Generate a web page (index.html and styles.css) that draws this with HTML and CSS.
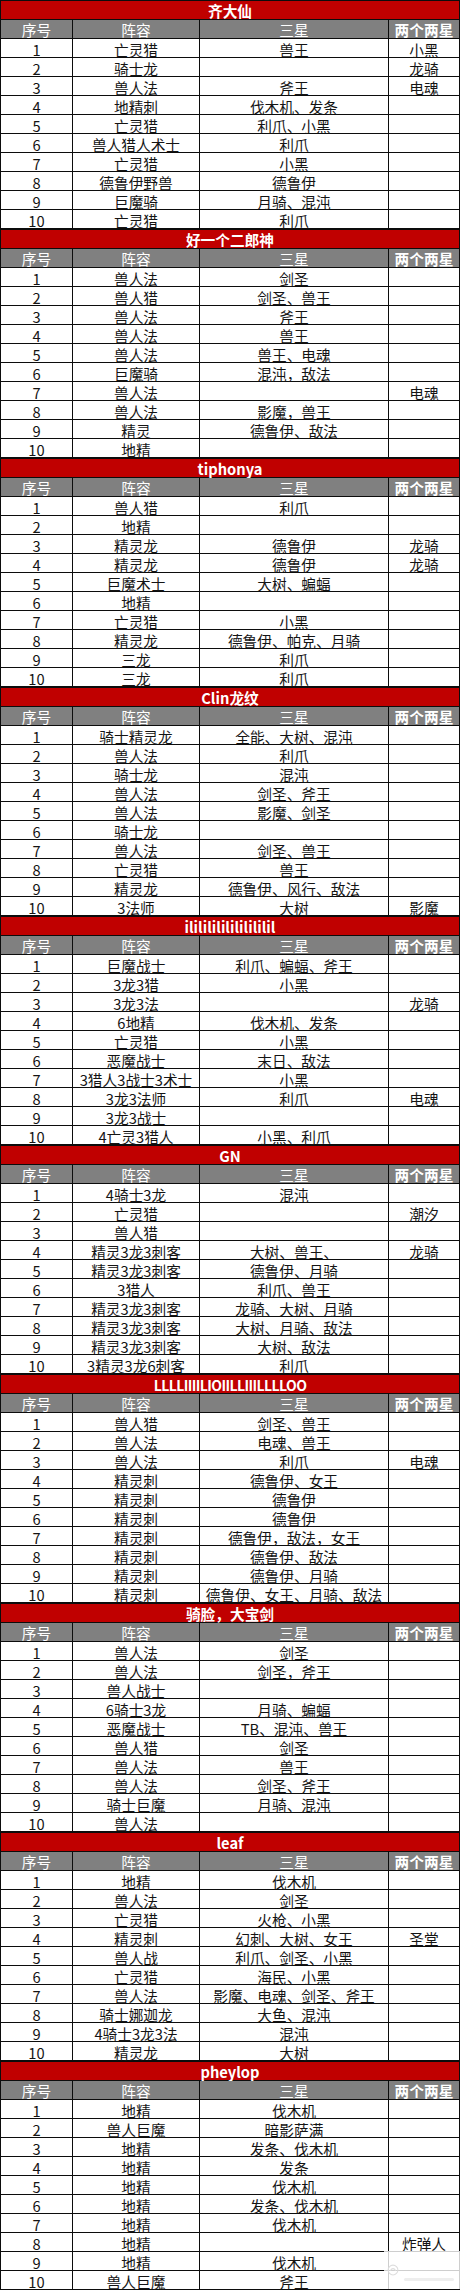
FILE: index.html
```html
<!DOCTYPE html>
<html lang="zh-CN">
<head>
<meta charset="utf-8">
<title>阵容表</title>
<link rel="stylesheet" href="styles.css">
</head>
<body>
<main class="sheet">

<section class="block">
<div class="title">齐大仙</div>
<div class="h">序号</div><div class="h">阵容</div><div class="h">三星</div><div class="h h4">两个两星</div>
<div class="c">1</div><div class="c">亡灵猎</div><div class="c">兽王</div><div class="c">小黑</div>
<div class="c">2</div><div class="c">骑士龙</div><div class="c"></div><div class="c">龙骑</div>
<div class="c">3</div><div class="c">兽人法</div><div class="c">斧王</div><div class="c">电魂</div>
<div class="c">4</div><div class="c">地精刺</div><div class="c">伐木机、发条</div><div class="c"></div>
<div class="c">5</div><div class="c">亡灵猎</div><div class="c">利爪、小黑</div><div class="c"></div>
<div class="c">6</div><div class="c">兽人猎人术士</div><div class="c">利爪</div><div class="c"></div>
<div class="c">7</div><div class="c">亡灵猎</div><div class="c">小黑</div><div class="c"></div>
<div class="c">8</div><div class="c">德鲁伊野兽</div><div class="c">德鲁伊</div><div class="c"></div>
<div class="c">9</div><div class="c">巨魔骑</div><div class="c">月骑、混沌</div><div class="c"></div>
<div class="c">10</div><div class="c">亡灵猎</div><div class="c">利爪</div><div class="c"></div>
</section>

<section class="block">
<div class="title">好一个二郎神</div>
<div class="h">序号</div><div class="h">阵容</div><div class="h">三星</div><div class="h h4">两个两星</div>
<div class="c">1</div><div class="c">兽人法</div><div class="c">剑圣</div><div class="c"></div>
<div class="c">2</div><div class="c">兽人猎</div><div class="c">剑圣、兽王</div><div class="c"></div>
<div class="c">3</div><div class="c">兽人法</div><div class="c">斧王</div><div class="c"></div>
<div class="c">4</div><div class="c">兽人法</div><div class="c">兽王</div><div class="c"></div>
<div class="c">5</div><div class="c">兽人法</div><div class="c">兽王、电魂</div><div class="c"></div>
<div class="c">6</div><div class="c">巨魔骑</div><div class="c">混沌，敌法</div><div class="c"></div>
<div class="c">7</div><div class="c">兽人法</div><div class="c"></div><div class="c">电魂</div>
<div class="c">8</div><div class="c">兽人法</div><div class="c">影魔，兽王</div><div class="c"></div>
<div class="c">9</div><div class="c">精灵</div><div class="c">德鲁伊、敌法</div><div class="c"></div>
<div class="c">10</div><div class="c">地精</div><div class="c"></div><div class="c"></div>
</section>

<section class="block">
<div class="title">tiphonya</div>
<div class="h">序号</div><div class="h">阵容</div><div class="h">三星</div><div class="h h4">两个两星</div>
<div class="c">1</div><div class="c">兽人猎</div><div class="c">利爪</div><div class="c"></div>
<div class="c">2</div><div class="c">地精</div><div class="c"></div><div class="c"></div>
<div class="c">3</div><div class="c">精灵龙</div><div class="c">德鲁伊</div><div class="c">龙骑</div>
<div class="c">4</div><div class="c">精灵龙</div><div class="c">德鲁伊</div><div class="c">龙骑</div>
<div class="c">5</div><div class="c">巨魔术士</div><div class="c">大树、蝙蝠</div><div class="c"></div>
<div class="c">6</div><div class="c">地精</div><div class="c"></div><div class="c"></div>
<div class="c">7</div><div class="c">亡灵猎</div><div class="c">小黑</div><div class="c"></div>
<div class="c">8</div><div class="c">精灵龙</div><div class="c">德鲁伊、帕克、月骑</div><div class="c"></div>
<div class="c">9</div><div class="c">三龙</div><div class="c">利爪</div><div class="c"></div>
<div class="c">10</div><div class="c">三龙</div><div class="c">利爪</div><div class="c"></div>
</section>

<section class="block">
<div class="title">Clin龙纹</div>
<div class="h">序号</div><div class="h">阵容</div><div class="h">三星</div><div class="h h4">两个两星</div>
<div class="c">1</div><div class="c">骑士精灵龙</div><div class="c">全能、大树、混沌</div><div class="c"></div>
<div class="c">2</div><div class="c">兽人法</div><div class="c">利爪</div><div class="c"></div>
<div class="c">3</div><div class="c">骑士龙</div><div class="c">混沌</div><div class="c"></div>
<div class="c">4</div><div class="c">兽人法</div><div class="c">剑圣、斧王</div><div class="c"></div>
<div class="c">5</div><div class="c">兽人法</div><div class="c">影魔、剑圣</div><div class="c"></div>
<div class="c">6</div><div class="c">骑士龙</div><div class="c"></div><div class="c"></div>
<div class="c">7</div><div class="c">兽人法</div><div class="c">剑圣、兽王</div><div class="c"></div>
<div class="c">8</div><div class="c">亡灵猎</div><div class="c">兽王</div><div class="c"></div>
<div class="c">9</div><div class="c">精灵龙</div><div class="c">德鲁伊、风行、敌法</div><div class="c"></div>
<div class="c">10</div><div class="c">3法师</div><div class="c">大树</div><div class="c">影魔</div>
</section>

<section class="block">
<div class="title">ilililililililililil</div>
<div class="h">序号</div><div class="h">阵容</div><div class="h">三星</div><div class="h h4">两个两星</div>
<div class="c">1</div><div class="c">巨魔战士</div><div class="c">利爪、蝙蝠、斧王</div><div class="c"></div>
<div class="c">2</div><div class="c">3龙3猎</div><div class="c">小黑</div><div class="c"></div>
<div class="c">3</div><div class="c">3龙3法</div><div class="c"></div><div class="c">龙骑</div>
<div class="c">4</div><div class="c">6地精</div><div class="c">伐木机、发条</div><div class="c"></div>
<div class="c">5</div><div class="c">亡灵猎</div><div class="c">小黑</div><div class="c"></div>
<div class="c">6</div><div class="c">恶魔战士</div><div class="c">末日、敌法</div><div class="c"></div>
<div class="c">7</div><div class="c">3猎人3战士3术士</div><div class="c">小黑</div><div class="c"></div>
<div class="c">8</div><div class="c">3龙3法师</div><div class="c">利爪</div><div class="c">电魂</div>
<div class="c">9</div><div class="c">3龙3战士</div><div class="c"></div><div class="c"></div>
<div class="c">10</div><div class="c">4亡灵3猎人</div><div class="c">小黑、利爪</div><div class="c"></div>
</section>

<section class="block">
<div class="title">GN</div>
<div class="h">序号</div><div class="h">阵容</div><div class="h">三星</div><div class="h h4">两个两星</div>
<div class="c">1</div><div class="c">4骑士3龙</div><div class="c">混沌</div><div class="c"></div>
<div class="c">2</div><div class="c">亡灵猎</div><div class="c"></div><div class="c">潮汐</div>
<div class="c">3</div><div class="c">兽人猎</div><div class="c"></div><div class="c"></div>
<div class="c">4</div><div class="c">精灵3龙3刺客</div><div class="c">大树、兽王、</div><div class="c">龙骑</div>
<div class="c">5</div><div class="c">精灵3龙3刺客</div><div class="c">德鲁伊、月骑</div><div class="c"></div>
<div class="c">6</div><div class="c">3猎人</div><div class="c">利爪、兽王</div><div class="c"></div>
<div class="c">7</div><div class="c">精灵3龙3刺客</div><div class="c">龙骑、大树、月骑</div><div class="c"></div>
<div class="c">8</div><div class="c">精灵3龙3刺客</div><div class="c">大树、月骑、敌法</div><div class="c"></div>
<div class="c">9</div><div class="c">精灵3龙3刺客</div><div class="c">大树、敌法</div><div class="c"></div>
<div class="c">10</div><div class="c">3精灵3龙6刺客</div><div class="c">利爪</div><div class="c"></div>
</section>

<section class="block">
<div class="title narrow">LLLLIIIILIOIILLIIILLLLOO</div>
<div class="h">序号</div><div class="h">阵容</div><div class="h">三星</div><div class="h h4">两个两星</div>
<div class="c">1</div><div class="c">兽人猎</div><div class="c">剑圣、兽王</div><div class="c"></div>
<div class="c">2</div><div class="c">兽人法</div><div class="c">电魂、兽王</div><div class="c"></div>
<div class="c">3</div><div class="c">兽人法</div><div class="c">利爪</div><div class="c">电魂</div>
<div class="c">4</div><div class="c">精灵刺</div><div class="c">德鲁伊、女王</div><div class="c"></div>
<div class="c">5</div><div class="c">精灵刺</div><div class="c">德鲁伊</div><div class="c"></div>
<div class="c">6</div><div class="c">精灵刺</div><div class="c">德鲁伊</div><div class="c"></div>
<div class="c">7</div><div class="c">精灵刺</div><div class="c">德鲁伊，敌法，女王</div><div class="c"></div>
<div class="c">8</div><div class="c">精灵刺</div><div class="c">德鲁伊、敌法</div><div class="c"></div>
<div class="c">9</div><div class="c">精灵刺</div><div class="c">德鲁伊、月骑</div><div class="c"></div>
<div class="c">10</div><div class="c">精灵刺</div><div class="c">德鲁伊、女王、月骑、敌法</div><div class="c"></div>
</section>

<section class="block">
<div class="title">骑脸，大宝剑</div>
<div class="h">序号</div><div class="h">阵容</div><div class="h">三星</div><div class="h h4">两个两星</div>
<div class="c">1</div><div class="c">兽人法</div><div class="c">剑圣</div><div class="c"></div>
<div class="c">2</div><div class="c">兽人法</div><div class="c">剑圣，斧王</div><div class="c"></div>
<div class="c">3</div><div class="c">兽人战士</div><div class="c"></div><div class="c"></div>
<div class="c">4</div><div class="c">6骑士3龙</div><div class="c">月骑、蝙蝠</div><div class="c"></div>
<div class="c">5</div><div class="c">恶魔战士</div><div class="c">TB、混沌、兽王</div><div class="c"></div>
<div class="c">6</div><div class="c">兽人猎</div><div class="c">剑圣</div><div class="c"></div>
<div class="c">7</div><div class="c">兽人法</div><div class="c">兽王</div><div class="c"></div>
<div class="c">8</div><div class="c">兽人法</div><div class="c">剑圣、斧王</div><div class="c"></div>
<div class="c">9</div><div class="c">骑士巨魔</div><div class="c">月骑、混沌</div><div class="c"></div>
<div class="c">10</div><div class="c">兽人法</div><div class="c"></div><div class="c"></div>
</section>

<section class="block">
<div class="title">leaf</div>
<div class="h">序号</div><div class="h">阵容</div><div class="h">三星</div><div class="h h4">两个两星</div>
<div class="c">1</div><div class="c">地精</div><div class="c">伐木机</div><div class="c"></div>
<div class="c">2</div><div class="c">兽人法</div><div class="c">剑圣</div><div class="c"></div>
<div class="c">3</div><div class="c">亡灵猎</div><div class="c">火枪、小黑</div><div class="c"></div>
<div class="c">4</div><div class="c">精灵刺</div><div class="c">幻刺、大树、女王</div><div class="c">圣堂</div>
<div class="c">5</div><div class="c">兽人战</div><div class="c">利爪、剑圣、小黑</div><div class="c"></div>
<div class="c">6</div><div class="c">亡灵猎</div><div class="c">海民、小黑</div><div class="c"></div>
<div class="c">7</div><div class="c">兽人法</div><div class="c">影魔、电魂、剑圣、斧王</div><div class="c"></div>
<div class="c">8</div><div class="c">骑士娜迦龙</div><div class="c">大鱼、混沌</div><div class="c"></div>
<div class="c">9</div><div class="c">4骑士3龙3法</div><div class="c">混沌</div><div class="c"></div>
<div class="c">10</div><div class="c">精灵龙</div><div class="c">大树</div><div class="c"></div>
</section>

<section class="block last">
<div class="title">pheylop</div>
<div class="h">序号</div><div class="h">阵容</div><div class="h">三星</div><div class="h h4">两个两星</div>
<div class="c">1</div><div class="c">地精</div><div class="c">伐木机</div><div class="c"></div>
<div class="c">2</div><div class="c">兽人巨魔</div><div class="c">暗影萨满</div><div class="c"></div>
<div class="c">3</div><div class="c">地精</div><div class="c">发条、伐木机</div><div class="c"></div>
<div class="c">4</div><div class="c">地精</div><div class="c">发条</div><div class="c"></div>
<div class="c">5</div><div class="c">地精</div><div class="c">伐木机</div><div class="c"></div>
<div class="c">6</div><div class="c">地精</div><div class="c">发条、伐木机</div><div class="c"></div>
<div class="c">7</div><div class="c">地精</div><div class="c">伐木机</div><div class="c"></div>
<div class="c">8</div><div class="c">地精</div><div class="c"></div><div class="c">炸弹人</div>
<div class="c">9</div><div class="c">地精</div><div class="c">伐木机</div><div class="c"></div>
<div class="c">10</div><div class="c">兽人巨魔</div><div class="c">斧王</div><div class="c"></div>
<div class="watermark" aria-hidden="true">
<svg class="wm-icon" viewBox="0 0 20 20" width="14" height="14"><circle cx="10" cy="10" r="7" fill="none" stroke="#dddddd" stroke-width="1.5"/><path d="M6 11 Q10 5 14 11" fill="none" stroke="#dddddd" stroke-width="1.5"/></svg>
<span class="wm-line"></span>
</div>
</section>

</main>
</body>
</html>
```

FILE: styles.css
```css
html, body {
  margin: 0;
  padding: 0;
  background: #ffffff;
}

body {
  font-family: "Noto Sans CJK SC", "Microsoft YaHei", "Liberation Sans", sans-serif;
  color: #111111;
}

.sheet {
  width: 460px;
  display: flex;
  flex-direction: column;
}

.block {
  position: relative;
  display: grid;
  grid-template-columns: 71px 126px 188px 70px;
  grid-auto-rows: 18px;
  gap: 1px;
  padding: 1px;
  background: #0c0c0c;
}

.block > div {
  text-align: center;
  white-space: nowrap;
  font-size: 14.7px;
  overflow: visible;
}

.title {
  grid-column: 1 / -1;
  background: #c00000;
  color: #ffffff;
  font-weight: 700;
  line-height: 20px;
}

.title.narrow {
  letter-spacing: -0.6px;
  font-size: 14px;
}

.h {
  background: #808080;
  color: #ffffff;
  line-height: 20px;
}

.h4 {
  font-weight: 700;
}

.c {
  background: #ffffff;
  color: #141414;
  line-height: 22px;
}

.watermark {
  position: absolute;
  left: 384px;
  top: 190px;
  width: 76px;
  height: 38px;
  background: rgba(255, 255, 255, 0.8);
  display: flex;
  align-items: center;
  gap: 4px;
  padding-left: 2px;
  box-sizing: border-box;
}

.wm-icon {
  flex: none;
}

.wm-line {
  flex: 1;
  height: 3px;
  margin-right: 6px;
  margin-top: 18px;
  background: #eeeeee;
  border-radius: 2px;
}
```
